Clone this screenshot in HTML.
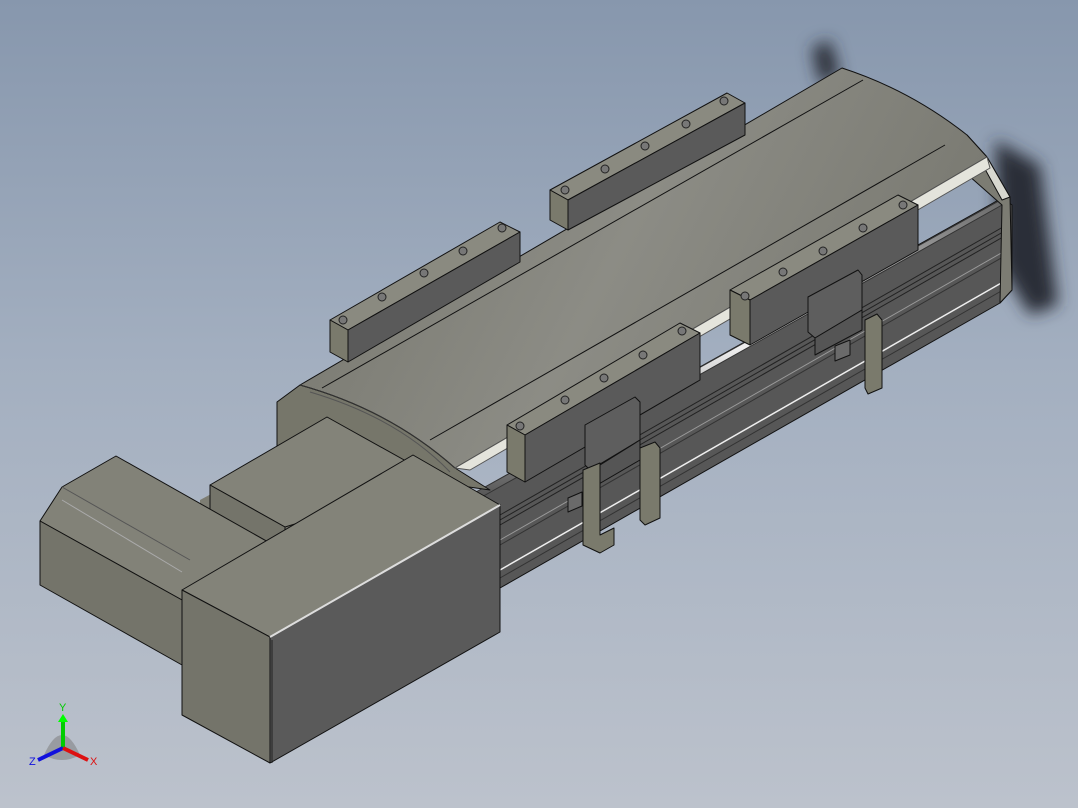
<!DOCTYPE html>
<html><head><meta charset="utf-8"><style>
html,body{margin:0;padding:0;width:1078px;height:808px;overflow:hidden}
body{background:linear-gradient(180deg,#8797ad 0%,#a3afc0 45%,#bcc2cc 100%)}
svg{position:absolute;left:0;top:0}
text{font-family:"Liberation Sans",sans-serif}
</style></head><body>
<svg width="1078" height="808" viewBox="0 0 1078 808" xmlns="http://www.w3.org/2000/svg">
<defs>
<filter id="bl"><feGaussianBlur stdDeviation="8"/></filter>
<linearGradient id="cov" x1="0" y1="0" x2="1" y2="0.3"><stop offset="0" stop-color="#74746b"/><stop offset="0.55" stop-color="#8c8c85"/><stop offset="1" stop-color="#7a7a72"/></linearGradient>
<linearGradient id="rod" x1="0" y1="0" x2="0" y2="1"><stop offset="0" stop-color="#666"/><stop offset="0.5" stop-color="#eee"/><stop offset="1" stop-color="#555"/></linearGradient>
</defs>
<g stroke="#111" stroke-width="1" stroke-linejoin="round">
<!-- shadow -->
<path d="M812,48 L830,40 L840,75 L820,85Z M995,140 L1040,165 L1058,305 L1030,315 L1000,265Z" fill="#2b2f38" stroke="none" filter="url(#bl)"/>
<!-- rail side -->
<polygon points="480,490 1002,198 1012,205 1012,290 1000,303 500,588" fill="#575757"/>
<g fill="none" stroke-width="1">
<line x1="500" y1="515" x2="1010" y2="223" stroke="#222"/>
<line x1="500" y1="520" x2="1010" y2="228" stroke="#222"/>
<line x1="500" y1="525" x2="1010" y2="233" stroke="#222"/>
<line x1="500" y1="540" x2="1010" y2="248" stroke="#999"/>
<line x1="500" y1="545" x2="1010" y2="253" stroke="#333"/>
<line x1="500" y1="570" x2="1010" y2="278" stroke="#eee" stroke-width="1.5"/>
<line x1="500" y1="578" x2="1010" y2="286" stroke="#333"/>
</g>
<polygon points="480,498 1002,205 1006,197 476,492" fill="url(#rod)" stroke="#333"/>
<!-- end face right -->
<polygon points="987,157 1010,197 1012,290 1000,303 1002,205 968,175" fill="#7c7c73"/>
<polygon points="967,135 987,157 1010,197 1002,200 980,160" fill="#d8d8d0"/>
<!-- left end cap -->
<path d="M277,402 L300,385 Q390,410 455,468 L490,490 L420,480 L277,480Z" fill="#76766a"/>
<!-- cover -->
<path d="M300,385 L842,68 Q910,90 967,135 L987,157 L455,468 Q390,410 300,385Z" fill="url(#cov)"/>
<path d="M322,388 L863,80" fill="none"/>
<path d="M430,440 L945,145" fill="none"/>
<path d="M300,385 Q390,410 455,468" fill="none" stroke="#333"/>
<path d="M310,392 Q398,418 450,472" fill="none" stroke="#555"/>
<polygon points="455,468 987,157 990,168 470,470" fill="#e4e4dc" stroke="#555"/>
<!-- back blocks -->
<g>
<polygon points="330,320 500,222 520,232 348,330" fill="#8a8a80"/>
<polygon points="348,330 520,232 520,262 348,362" fill="#5a5a5a"/>
<polygon points="330,320 348,330 348,362 330,352" fill="#7a7a6c"/>
<polygon points="550,190 727,93 745,103 568,200" fill="#8a8a80"/>
<polygon points="568,200 745,103 745,135 568,230" fill="#5a5a5a"/>
<polygon points="550,190 568,200 568,230 550,220" fill="#7a7a6c"/>
</g>
<!-- front blocks -->
<g>
<polygon points="507,425 680,323 700,333 525,435" fill="#8a8a80"/>
<polygon points="525,435 700,333 700,380 525,482" fill="#5a5a5a"/>
<polygon points="507,425 525,435 525,482 507,472" fill="#7a7a6c"/>
<polygon points="730,290 898,195 918,205 750,300" fill="#8a8a80"/>
<polygon points="750,300 918,205 918,250 750,345" fill="#5a5a5a"/>
<polygon points="730,290 750,300 750,345 730,335" fill="#7a7a6c"/>
</g>
<g fill="#777" stroke="#222">
<circle cx="343" cy="320" r="4"/><circle cx="382" cy="297" r="4"/><circle cx="424" cy="273" r="4"/><circle cx="463" cy="251" r="4"/><circle cx="502" cy="228" r="4"/>
<circle cx="565" cy="190" r="4"/><circle cx="605" cy="169" r="4"/><circle cx="645" cy="146" r="4"/><circle cx="686" cy="124" r="4"/><circle cx="724" cy="101" r="4"/>
<circle cx="520" cy="426" r="4"/><circle cx="565" cy="400" r="4"/><circle cx="604" cy="378" r="4"/><circle cx="643" cy="355" r="4"/><circle cx="682" cy="331" r="4"/>
<circle cx="745" cy="296" r="4"/><circle cx="783" cy="272" r="4"/><circle cx="823" cy="251" r="4"/><circle cx="863" cy="228" r="4"/><circle cx="903" cy="205" r="4"/>
</g>
<!-- brackets -->
<g fill="#5e5e5e">
<polygon points="585,425 635,397 640,402 640,440 590,470 585,465"/>
<polygon points="592,470 640,440 640,460 592,488" fill="#555"/>
<polygon points="583,470 600,463 600,535 614,528 614,545 600,553 583,545" fill="#7a7a6c"/>
<polygon points="640,448 655,442 660,448 660,518 645,525 640,520" fill="#7a7a6c"/>
<polygon points="568,498 582,492 582,506 568,512" fill="#6a6a6a"/>
<polygon points="808,297 858,270 862,275 862,310 815,338 808,332"/>
<polygon points="815,338 862,310 862,330 815,355" fill="#555"/>
<polygon points="865,320 877,314 882,320 882,388 868,394 865,388" fill="#7a7a6c"/>
<polygon points="835,346 850,340 850,355 835,361" fill="#6a6a6a"/>
</g>
<!-- filler between boxes -->
<polygon points="200,500 330,430 420,480 300,570 200,560" fill="#7d7d73" stroke="none"/>
<!-- middle box -->
<polygon points="210,485 327,417 440,480 285,527" fill="#838379"/>
<polygon points="210,485 285,527 285,565 210,520" fill="#74746a"/>
<!-- left box -->
<polygon points="40,521 62,487 116,456 300,560 182,600" fill="#828278"/>
<polygon points="40,521 182,600 182,665 40,585" fill="#74746a"/>
<line x1="62" y1="500" x2="182" y2="572" stroke="#aaa"/>
<line x1="62" y1="487" x2="190" y2="560" stroke="#555"/>
<!-- motor -->
<polygon points="182,590 413,455 500,505 270,637" fill="#838379"/>
<polygon points="182,590 270,637 270,763 182,715" fill="#74746a"/>
<polygon points="270,637 500,505 500,632 270,763" fill="#5a5a5a"/>
<line x1="270" y1="637" x2="500" y2="505" stroke="#ddd" stroke-width="2"/>
<line x1="272" y1="640" x2="272" y2="763" stroke="#222"/>
</g>
<!-- triad -->
<g>
<path d="M44,755 Q62,715 80,755 Q62,765 44,755Z" fill="#777" opacity="0.5"/>
<line x1="63" y1="720" x2="63" y2="748" stroke="#0c0" stroke-width="4"/>
<polygon points="58,722 63,714 68,722" fill="#0f0"/>
<line x1="63" y1="748" x2="38" y2="760" stroke="#11d" stroke-width="4"/>
<line x1="63" y1="748" x2="88" y2="760" stroke="#d11" stroke-width="4"/>
<text x="59" y="711" font-size="11" fill="#0c0">Y</text>
<text x="29" y="765" font-size="11" fill="#11d">Z</text>
<text x="90" y="765" font-size="11" fill="#d11">X</text>
</g>
</svg>
</body></html>
